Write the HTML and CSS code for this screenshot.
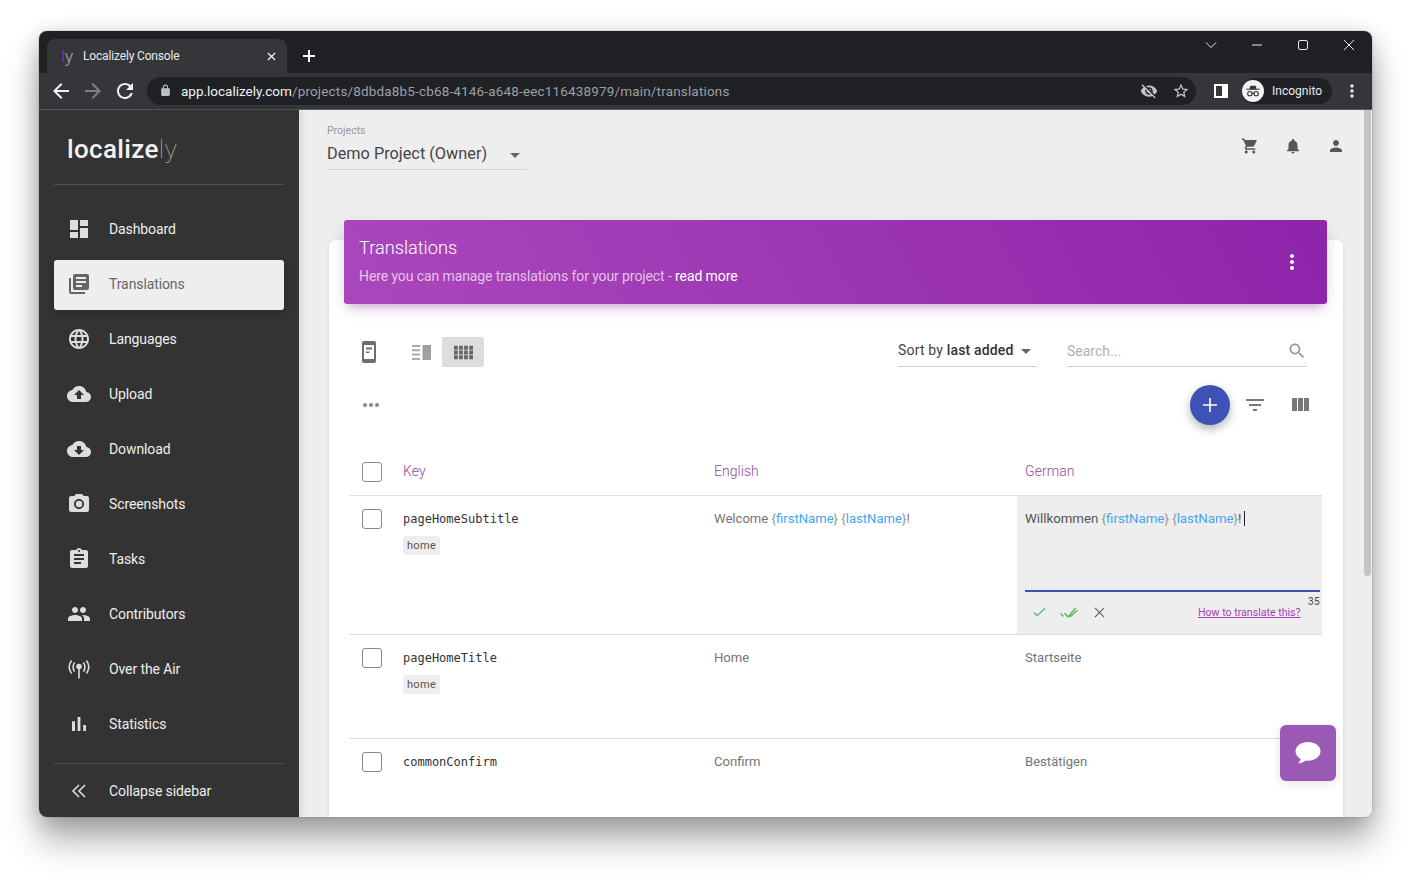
FILE: index.html
```html
<!DOCTYPE html>
<html lang="en">
<head>
    <meta charset="UTF-8">
    <meta name="viewport" content="width=device-width, initial-scale=1.0">
    <title>Localizely Console</title>
    <link rel="stylesheet" href="styles.css">
</head>
<body>
    <div class="window">
        <div class="tabstrip">
            <div class="tab">
                <span class="tab-logo"><span class="tab-l">l</span>y</span>
                <span class="tab-title">Localizely Console</span>
                <svg class="tab-close" viewBox="0 0 10 10"><path d="M1 1l8 8M9 1l-8 8"/></svg>
            </div>
            <svg class="new-tab" viewBox="0 0 12 12"><path d="M6 0v12M0 6h12"/></svg>
            <div class="win-controls">
                <svg viewBox="0 0 12 12"><path d="M1 3.5l5 5 5-5"/></svg>
                <svg viewBox="0 0 12 12"><path d="M1 6h10"/></svg>
                <svg viewBox="0 0 12 12"><rect x="1.5" y="1.5" width="9" height="9" rx="1.5"/></svg>
                <svg viewBox="0 0 12 12"><path d="M1 1l10 10M11 1L1 11"/></svg>
            </div>
        </div>
        <div class="toolbar">
            <svg class="ic-chrome" viewBox="0 0 24 24"><path d="M20 11H7.83l5.59-5.59L12 4l-8 8 8 8 1.41-1.41L7.83 13H20v-2z"/></svg>
            <svg class="ic-chrome dim" viewBox="0 0 24 24"><path d="M12 4l-1.41 1.41L16.17 11H4v2h12.17l-5.58 5.59L12 20l8-8z"/></svg>
            <svg class="ic-chrome" viewBox="0 0 24 24"><path d="M17.65 6.35C16.2 4.9 14.21 4 12 4c-4.42 0-7.99 3.58-7.99 8s3.57 8 7.99 8c3.73 0 6.84-2.55 7.73-6h-2.08c-.82 2.33-3.04 4-5.65 4-3.31 0-6-2.69-6-6s2.69-6 6-6c1.66 0 3.14.69 4.22 1.78L13 11h7V4l-2.35 2.35z"/></svg>
            <div class="omnibox">
                <svg class="ic-lock" viewBox="0 0 24 24"><path d="M18 8h-1V6c0-2.76-2.24-5-5-5S7 3.24 7 6v2H6c-1.1 0-2 .9-2 2v10c0 1.1.9 2 2 2h12c1.1 0 2-.9 2-2V10c0-1.1-.9-2-2-2zM9 6c0-1.66 1.34-3 3-3s3 1.34 3 3v2H9V6z"/></svg>
                <span class="url"><span class="url-host">app.localizely.com</span>/projects/8dbda8b5-cb68-4146-a648-eec116438979/main/translations</span>
                <svg class="ic-omni" viewBox="0 0 24 24"><path d="M12 7c2.76 0 5 2.24 5 5 0 .65-.13 1.26-.36 1.83l2.92 2.92c1.51-1.26 2.7-2.89 3.43-4.75-1.73-4.39-6-7.5-11-7.5-1.4 0-2.74.25-3.98.7l2.16 2.16C10.74 7.13 11.35 7 12 7zM2 4.27l2.28 2.28.46.46C3.08 8.3 1.78 10.02 1 12c1.73 4.39 6 7.5 11 7.5 1.55 0 3.03-.3 4.38-.84l.42.42L19.73 22 21 20.73 3.27 3 2 4.27zM7.53 9.8l1.55 1.55c-.05.21-.08.43-.08.65 0 1.66 1.34 3 3 3 .22 0 .44-.03.65-.08l1.55 1.55c-.67.33-1.41.53-2.2.53-2.76 0-5-2.24-5-5 0-.79.2-1.53.53-2.2zm4.31-.78l3.15 3.15.02-.16c0-1.66-1.34-3-3-3l-.17.01z"/></svg>
                <svg class="ic-omni" viewBox="0 0 24 24"><path d="M22 9.24l-7.19-.62L12 2 9.19 8.63 2 9.24l5.46 4.73L5.82 21 12 17.27 18.18 21l-1.63-7.03L22 9.24zM12 15.4l-3.76 2.27 1-4.28-3.32-2.88 4.38-.38L12 6.1l1.71 4.04 4.38.38-3.32 2.88 1 4.28L12 15.4z"/></svg>
            </div>
            <svg class="ic-panel" viewBox="0 0 14 14"><path fill-rule="evenodd" d="M0 0h14v14H0zM2 2v10h6V2z"/></svg>
            <div class="incognito">
                <span class="incognito-badge">
                    <svg viewBox="0 0 24 24"><path d="M8.5 5h7l1.2 4H21v1.4H3V9h4.3z"/><circle cx="7.8" cy="15.5" r="2.9"/><circle cx="16.2" cy="15.5" r="2.9"/><path d="M10.7 15.2h2.6"/></svg>
                </span>
                <span>Incognito</span>
            </div>
            <svg class="ic-more" viewBox="0 0 24 24"><path d="M12 8c1.1 0 2-.9 2-2s-.9-2-2-2-2 .9-2 2 .9 2 2 2zm0 2c-1.1 0-2 .9-2 2s.9 2 2 2 2-.9 2-2-.9-2-2-2zm0 6c-1.1 0-2 .9-2 2s.9 2 2 2 2-.9 2-2-.9-2-2-2z"/></svg>
        </div>

        <div class="app">
            <aside class="sidebar">
                <div class="logo">localize<span class="logo-thin">ly</span></div>
                <nav class="nav">
                    <a class="nav-item"><svg viewBox="0 0 24 24"><path d="M3 13h8V3H3v10zm0 8h8v-6H3v6zm10 0h8V11h-8v10zm0-18v6h8V3h-8z"/></svg>Dashboard</a>
                    <a class="nav-item active"><svg viewBox="0 0 24 24"><path d="M4 6H2v14c0 1.1.9 2 2 2h14v-2H4V6zm16-4H8c-1.1 0-2 .9-2 2v12c0 1.1.9 2 2 2h12c1.1 0 2-.9 2-2V4c0-1.1-.9-2-2-2zm-1 9H9V9h10v2zm-4 4H9v-2h6v2zm4-8H9V5h10v2z"/></svg>Translations</a>
                    <a class="nav-item"><svg viewBox="0 0 24 24"><path d="M11.99 2C6.47 2 2 6.48 2 12s4.47 10 9.99 10C17.52 22 22 17.52 22 12S17.52 2 11.99 2zm6.93 6h-2.95c-.32-1.25-.78-2.45-1.38-3.56 1.84.63 3.37 1.91 4.33 3.56zM12 4.04c.83 1.2 1.48 2.53 1.91 3.96h-3.82c.43-1.43 1.08-2.76 1.91-3.96zM4.26 14C4.1 13.36 4 12.69 4 12s.1-1.36.26-2h3.38c-.08.66-.14 1.32-.14 2 0 .68.06 1.34.14 2H4.26zm.82 2h2.95c.32 1.25.78 2.45 1.38 3.56-1.84-.63-3.37-1.9-4.33-3.56zm2.95-8H5.08c.96-1.66 2.49-2.93 4.33-3.56C8.81 5.55 8.35 6.75 8.03 8zM12 19.96c-.83-1.2-1.48-2.53-1.91-3.96h3.82c-.43 1.43-1.08 2.76-1.91 3.96zM14.34 14H9.66c-.09-.66-.16-1.32-.16-2 0-.68.07-1.35.16-2h4.68c.09.65.16 1.32.16 2 0 .68-.07 1.34-.16 2zm.25 5.56c.6-1.11 1.06-2.31 1.38-3.56h2.95c-.96 1.65-2.49 2.93-4.33 3.56zM16.36 14c.08-.66.14-1.32.14-2 0-.68-.06-1.34-.14-2h3.38c.16.64.26 1.31.26 2s-.1 1.36-.26 2h-3.38z"/></svg>Languages</a>
                    <a class="nav-item"><svg viewBox="0 0 24 24"><path d="M19.35 10.04C18.67 6.59 15.64 4 12 4 9.11 4 6.6 5.64 5.35 8.04 2.34 8.36 0 10.91 0 14c0 3.31 2.69 6 6 6h13c2.76 0 5-2.24 5-5 0-2.64-2.05-4.78-4.65-4.96zM14 13v4h-4v-4H7l5-5 5 5h-3z"/></svg>Upload</a>
                    <a class="nav-item"><svg viewBox="0 0 24 24"><path d="M19.35 10.04C18.67 6.59 15.64 4 12 4 9.11 4 6.6 5.64 5.35 8.04 2.34 8.36 0 10.91 0 14c0 3.31 2.69 6 6 6h13c2.76 0 5-2.24 5-5 0-2.64-2.05-4.78-4.65-4.96zM17 13l-5 5-5-5h3V9h4v4h3z"/></svg>Download</a>
                    <a class="nav-item"><svg viewBox="0 0 24 24"><circle cx="12" cy="12" r="3.2"/><path d="M9 2L7.17 4H4c-1.1 0-2 .9-2 2v12c0 1.1.9 2 2 2h16c1.1 0 2-.9 2-2V6c0-1.1-.9-2-2-2h-3.17L15 2H9zm3 15c-2.76 0-5-2.24-5-5s2.24-5 5-5 5 2.24 5 5-2.24 5-5 5z"/></svg>Screenshots</a>
                    <a class="nav-item"><svg viewBox="0 0 24 24"><path d="M19 3h-4.18C14.4 1.84 13.3 1 12 1c-1.3 0-2.4.84-2.82 2H5c-1.1 0-2 .9-2 2v14c0 1.1.9 2 2 2h14c1.1 0 2-.9 2-2V5c0-1.1-.9-2-2-2zm-7 0c.55 0 1 .45 1 1s-.45 1-1 1-1-.45-1-1 .45-1 1-1zm2 14H7v-2h7v2zm3-4H7v-2h10v2zm0-4H7V7h10v2z"/></svg>Tasks</a>
                    <a class="nav-item"><svg viewBox="0 0 24 24"><path d="M16 11c1.66 0 2.99-1.34 2.99-3S17.66 5 16 5c-1.66 0-3 1.34-3 3s1.34 3 3 3zm-8 0c1.66 0 2.99-1.34 2.99-3S9.66 5 8 5C6.34 5 5 6.34 5 8s1.34 3 3 3zm0 2c-2.33 0-7 1.17-7 3.5V19h14v-2.5c0-2.33-4.67-3.5-7-3.5zm8 0c-.29 0-.62.02-.97.05 1.16.84 1.97 1.97 1.97 3.45V19h6v-2.5c0-2.33-4.67-3.5-7-3.5z"/></svg>Contributors</a>
                    <a class="nav-item"><svg class="stroked" viewBox="0 0 24 24"><circle class="solid" cx="12" cy="9.5" r="2"/><path d="M12 10v11.5M7.6 5.5C5.6 8 5.6 12 7.6 14.5M16.4 5.5c2 2.5 2 6.5 0 9M4.6 3.5C1.6 7.5 1.6 12.5 4.6 16.5M19.4 3.5c3 4 3 9 0 13"/></svg>Over the Air</a>
                    <a class="nav-item"><svg viewBox="0 0 24 24"><path d="M5 9.2h3V19H5zM10.6 5h2.8v14h-2.8zm5.6 8H19v6h-2.8z"/></svg>Statistics</a>
                </nav>
                <a class="nav-item collapse"><svg class="stroked" viewBox="0 0 24 24"><path d="M12 6l-6 6 6 6M18 6l-6 6 6 6"/></svg>Collapse sidebar</a>
            </aside>

            <main class="main">
                <div class="topbar">
                    <div class="project-select">
                        <label class="project-label">Projects</label>
                        <div class="project-value">Demo Project (Owner)<span class="caret"></span></div>
                    </div>
                    <div class="top-icons">
                        <svg viewBox="0 0 24 24"><path d="M7 18c-1.1 0-1.99.9-1.99 2S5.9 22 7 22s2-.9 2-2-.9-2-2-2zM1 2v2h2l3.6 7.59-1.35 2.45c-.16.28-.25.61-.25.96 0 1.1.9 2 2 2h12v-2H7.42c-.14 0-.25-.11-.25-.25l.03-.12.9-1.63h7.45c.75 0 1.41-.41 1.75-1.03l3.58-6.49c.08-.14.12-.31.12-.48 0-.55-.45-1-1-1H5.21l-.94-2H1zm16 16c-1.1 0-1.99.9-1.99 2s.89 2 1.99 2 2-.9 2-2-.9-2-2-2z"/></svg>
                        <svg viewBox="0 0 24 24"><path d="M12 22c1.1 0 2-.9 2-2h-4c0 1.1.89 2 2 2zm6-6v-5c0-3.07-1.64-5.64-4.5-6.32V4c0-.83-.67-1.5-1.5-1.5s-1.5.67-1.5 1.5v.68C7.63 5.36 6 7.92 6 11v5l-2 2v1h16v-1l-2-2z"/></svg>
                        <svg viewBox="0 0 24 24"><path d="M12 12c2.21 0 4-1.79 4-4s-1.79-4-4-4-4 1.79-4 4 1.79 4 4 4zm0 2c-2.67 0-8 1.34-8 4v2h16v-2c0-2.66-5.33-4-8-4z"/></svg>
                    </div>
                </div>

                <section class="card">
                    <header class="card-header">
                        <div class="card-heading">
                            <h1 class="card-title">Translations</h1>
                            <p class="card-sub">Here you can manage translations for your project - <a class="read-more">read more</a></p>
                        </div>
                        <svg class="card-more" viewBox="0 0 24 24"><path d="M12 8c1.1 0 2-.9 2-2s-.9-2-2-2-2 .9-2 2 .9 2 2 2zm0 2c-1.1 0-2 .9-2 2s.9 2 2 2 2-.9 2-2-.9-2-2-2zm0 6c-1.1 0-2 .9-2 2s.9 2 2 2 2-.9 2-2-.9-2-2-2z"/></svg>
                    </header>

                    <div class="controls">
                        <svg class="ic-device" viewBox="0 0 14 22"><path fill-rule="evenodd" d="M2 0h10a2 2 0 0 1 2 2v18a2 2 0 0 1-2 2H2a2 2 0 0 1-2-2V2a2 2 0 0 1 2-2zM2 4v14h10V4zM4 6.5h6v2H4zM4 10.500h3.500V12H4z"/></svg>
                        <div class="view-toggle">
                            <button class="view-btn"><svg viewBox="0 0 19 15"><path d="M0 0h8v2H0zM0 4.300h8v2H0zM0 8.600h8v2H0zM0 13h8v2H0z"/><path class="split-side" d="M10.500 0H19v15h-8.500z"/></svg></button>
                            <button class="view-btn selected"><svg viewBox="0 0 20 14"><path d="M0 0h4v4H0zM5.300 0h4v4h-4zM10.600 0h4v4h-4zM16 0h4v4h-4zM0 5h4v4H0zM5.300 5h4v4h-4zM10.600 5h4v4h-4zM16 5h4v4h-4zM0 10h4v4H0zM5.300 10h4v4h-4zM10.600 10h4v4h-4zM16 10h4v4h-4z"/></svg></button>
                        </div>
                        <div class="sort-select">Sort by <b>last added</b><span class="caret"></span></div>
                        <div class="search">
                            <span>Search...</span>
                            <svg viewBox="0 0 24 24"><path d="M15.5 14h-.79l-.28-.27C15.41 12.59 16 11.11 16 9.5 16 5.91 13.09 3 9.5 3S3 5.91 3 9.5 5.91 16 9.5 16c1.61 0 3.09-.59 4.23-1.57l.27.28v.79l5 4.99L20.49 19l-4.99-5zm-6 0C7.01 14 5 11.99 5 9.5S7.01 5 9.5 5 14 7.01 14 9.5 11.99 14 9.5 14z"/></svg>
                        </div>
                    </div>

                    <div class="actions">
                        <svg class="ic-dots" viewBox="0 0 16 4"><circle cx="2" cy="2" r="2"/><circle cx="8" cy="2" r="2"/><circle cx="14" cy="2" r="2"/></svg>
                        <button class="fab"><svg viewBox="0 0 14 14"><path d="M7 0v14M0 7h14"/></svg></button>
                        <svg class="ic-action" viewBox="0 0 24 24"><path d="M10 18h4v-2h-4v2zM3 6v2h18V6H3zm3 7h12v-2H6v2z"/></svg>
                        <svg class="ic-action" viewBox="0 0 24 24"><path d="M10 18h5V5h-5v13zm-6 0h5V5H4v13zM16 5v13h5V5h-5z"/></svg>
                    </div>

                    <div class="table">
                        <div class="row head">
                            <div class="cell key-cell"><span class="checkbox"></span><span>Key</span></div>
                            <div class="cell">English</div>
                            <div class="cell">German</div>
                        </div>
                        <div class="row row-edit">
                            <div class="cell key-cell">
                                <span class="checkbox"></span>
                                <div>
                                    <div class="key">pageHomeSubtitle</div>
                                    <span class="tag">home</span>
                                </div>
                            </div>
                            <div class="cell text">Welcome <span class="ph">{<i>firstName</i>}</span> <span class="ph">{<i>lastName</i>}</span>!</div>
                            <div class="cell editor">
                                <div class="editor-text">Willkommen <span class="ph">{<i>firstName</i>}</span> <span class="ph">{<i>lastName</i>}</span>!<span class="text-caret"></span></div>
                                <div class="editor-count">35</div>
                                <div class="editor-actions">
                                    <svg class="ok" viewBox="0 0 14 10"><path d="M1 5.500l3.500 3.500L13 1"/></svg>
                                    <svg class="ok-all" viewBox="0 0 18 11"><path d="M.5 6.500l3 3M4.500 6l3.500 4L15.500 1M9.500 8.500l1 1L17.500 3"/></svg>
                                    <svg class="no" viewBox="0 0 12 12"><path d="M1 1l10 10M11 1L1 11"/></svg>
                                    <a class="help-link">How to translate this?</a>
                                </div>
                            </div>
                        </div>
                        <div class="row row-tagged">
                            <div class="cell key-cell">
                                <span class="checkbox"></span>
                                <div>
                                    <div class="key">pageHomeTitle</div>
                                    <span class="tag">home</span>
                                </div>
                            </div>
                            <div class="cell text">Home</div>
                            <div class="cell text">Startseite</div>
                        </div>
                        <div class="row">
                            <div class="cell key-cell">
                                <span class="checkbox"></span>
                                <div class="key">commonConfirm</div>
                            </div>
                            <div class="cell text">Confirm</div>
                            <div class="cell text">Bestätigen</div>
                        </div>
                    </div>
                </section>
                <button class="chat"><svg viewBox="0 0 26 24"><path d="M13 1C6 1 .5 5.1.5 10.300c0 3.200 2 5.900 5 7.600-.3 1.600-1.200 3.200-2.500 4.600 2.900-.2 5.500-1.300 7.500-3 .8.100 1.600.2 2.500.2 7 0 12.500-4.100 12.500-9.400S20 1 13 1z"/></svg></button>
            </main>
            <div class="scrollbar"><div class="scroll-thumb"></div></div>
        </div>
    </div>
</body>
</html>
```

FILE: styles.css
```css
* {
    box-sizing: border-box;
}

body {
    margin: 0;
    height: 896px;
    overflow: hidden;
    padding: 31px 36px 0 39px;
    background: #ffffff;
    font-family: 'Roboto', sans-serif;
}

svg {
    display: block;
    flex: none;
    fill: currentColor;
}

button {
    border: none;
    padding: 0;
    font: inherit;
}

.window {
    display: flex;
    flex-direction: column;
    height: 786px;
    border-radius: 8px;
    overflow: hidden;
    box-shadow: 0 0 0 1px rgba(0, 0, 0, 0.08);
}

body::before {
    content: '';
    position: absolute;
    left: 39px;
    top: 31px;
    width: 1333px;
    height: 786px;
    border-radius: 8px;
    box-shadow: 0 24px 34px rgba(0, 0, 0, 0.3), 0 4px 22px rgba(0, 0, 0, 0.2);
}

.window > * {
    position: relative;
}

.tabstrip {
    display: flex;
    align-items: flex-end;
    height: 42px;
    padding-left: 8px;
    background: #202124;
}

.tab {
    display: flex;
    align-items: center;
    width: 240px;
    height: 34px;
    padding: 0 11px 0 14px;
    background: #35363a;
    border-radius: 8px 8px 0 0;
    color: #e8eaed;
    font-size: 12px;
}

.tab-logo {
    width: 22px;
    color: #9a9b9f;
    font-family: 'Open Sans', sans-serif;
    font-size: 16px;
}

.tab-l {
    color: #8e35a0;
}

.tab-title {
    flex: 1;
    letter-spacing: -0.16px;
}

.tab-close {
    width: 9px;
    height: 9px;
    fill: none;
    stroke: #e8eaed;
    stroke-width: 1.5;
}

.new-tab {
    width: 12px;
    height: 12px;
    margin: 0 0 11px 16px;
    fill: none;
    stroke: #ffffff;
    stroke-width: 2;
}

.win-controls {
    display: flex;
    align-self: flex-start;
    gap: 34px;
    margin: 8px 17px 0 auto;
}

.win-controls svg {
    width: 12px;
    height: 12px;
    fill: none;
    stroke: #e8eaed;
    stroke-width: 1;
}

.toolbar {
    display: flex;
    align-items: center;
    height: 37px;
    padding: 0 10px 1px 10px;
    background: #35363a;
    border-bottom: 1px solid #5a5b5e;
}

.ic-chrome {
    width: 24px;
    height: 24px;
    margin-right: 8px;
    color: #f1f3f4;
}

.ic-chrome.dim {
    color: #7d7f83;
}

.omnibox {
    display: flex;
    align-items: center;
    width: 1050px;
    height: 28px;
    margin-left: 2px;
    padding: 0 6px 0 12px;
    background: #202124;
    border-radius: 14px;
}

.ic-lock {
    width: 13px;
    height: 13px;
    margin-right: 9px;
    color: #bdc1c6;
}

.url {
    flex: 1;
    color: #9aa0a6;
    font-size: 13.5px;
    letter-spacing: 0.165px;
    white-space: nowrap;
}

.url-host {
    color: #f1f3f4;
    letter-spacing: 0;
}

.ic-omni {
    width: 18px;
    height: 18px;
    margin-right: 14px;
    color: #c4c7ca;
}

.ic-omni:last-child {
    margin-right: 0;
}

.ic-panel {
    width: 14px;
    height: 14px;
    margin-left: 18px;
    color: #ffffff;
}

.incognito {
    display: flex;
    align-items: center;
    gap: 8px;
    width: 90px;
    height: 26px;
    margin-left: 14px;
    background: #202124;
    border-radius: 13px;
    color: #e8eaed;
    font-size: 12px;
}

.incognito-badge {
    display: flex;
    align-items: center;
    justify-content: center;
    width: 22px;
    height: 22px;
    background: #f1f3f4;
    border-radius: 50%;
}

.incognito-badge svg {
    width: 18px;
    height: 18px;
    color: #35363a;
}

.incognito-badge circle,
.incognito-badge path:last-child {
    fill: none;
    stroke: #35363a;
    stroke-width: 1.5;
}

.ic-more {
    width: 20px;
    height: 20px;
    margin-left: 10px;
    color: #e8eaed;
}

.app {
    display: flex;
    flex: 1;
    min-height: 0;
}

.sidebar {
    flex: none;
    width: 260px;
    padding: 0 15px;
    background: #333333;
    box-shadow: 2px 0 8px rgba(0, 0, 0, 0.12);
    z-index: 1;
}

.logo {
    height: 75px;
    padding: 23px 0 0 13px;
    border-bottom: 1px solid #515151;
    color: #f2f2f2;
    font-size: 26px;
    font-weight: 500;
    line-height: 32px;
    letter-spacing: 0.35px;
}

.logo-thin {
    color: #b5b5b5;
    font-weight: 100;
}

.nav {
    display: flex;
    flex-direction: column;
    gap: 5px;
    margin-top: 20px;
    padding-bottom: 13px;
    border-bottom: 1px solid #515151;
}

.nav-item {
    display: flex;
    align-items: center;
    gap: 18px;
    height: 50px;
    padding: 0 0 2px 13px;
    border-radius: 3px;
    color: #eeeeee;
    font-size: 14px;
    letter-spacing: -0.1px;
}

.nav-item svg {
    width: 24px;
    height: 24px;
    color: #dddddd;
}

.nav-item svg.stroked {
    fill: none;
    stroke: #dddddd;
    stroke-width: 1.6;
}

.nav-item svg .solid {
    fill: #dddddd;
}

.nav-item.active {
    background: #eeeeee;
    box-shadow: 0 4px 10px rgba(0, 0, 0, 0.15);
    color: #666666;
}

.nav-item.active svg {
    color: #666666;
}

.collapse {
    margin-top: 3px;
}

.main {
    position: relative;
    flex: 1;
    min-width: 0;
    padding-left: 28px;
    background: #eeeeee;
    overflow: hidden;
}

.topbar {
    display: flex;
    justify-content: space-between;
    height: 110px;
    padding: 14px 18px 0 0;
}

.project-select {
    width: 200px;
    height: 46px;
    border-bottom: 1px solid #d2d2d2;
}

.project-label {
    display: block;
    color: #999999;
    font-size: 10.5px;
    line-height: 13px;
}

.project-value {
    display: flex;
    align-items: center;
    margin-top: 7px;
    color: #444444;
    font-size: 16.3px;
    line-height: 20px;
}

.caret {
    width: 0;
    height: 0;
    margin: 2px 0 0 23px;
    border-style: solid;
    border-width: 5px 5px 0;
    border-color: #666666 transparent transparent;
}

.top-icons {
    display: flex;
    gap: 25px;
    padding-top: 13px;
    color: #555555;
}

.top-icons svg {
    width: 18px;
    height: 18px;
}

.card {
    width: 1014px;
    margin: 20px 0 0 2px;
    padding: 0 15px;
    height: 600px;
    background: #ffffff;
    border-radius: 6px;
    box-shadow: 0 1px 4px rgba(0, 0, 0, 0.1);
}

.card-header {
    display: flex;
    align-items: center;
    justify-content: space-between;
    width: 983px;
    height: 84px;
    padding: 0 23px 0 15px;
    position: relative;
    top: -20px;
    background: linear-gradient(60deg, #ab47bc, #8e24aa);
    border-radius: 3px;
    box-shadow: 0 4px 20px rgba(0, 0, 0, 0.08), 0 7px 10px -5px rgba(156, 39, 176, 0.4);
    color: #ffffff;
}

.card-heading {
    padding-bottom: 3px;
}

.card-title {
    margin: 0;
    font-size: 18.2px;
    font-weight: 300;
    line-height: 24px;
}

.card-sub {
    margin: 7px 0 0;
    color: rgba(255, 255, 255, 0.7);
    font-size: 14px;
    line-height: 18px;
    letter-spacing: -0.1px;
}

.read-more {
    color: #ffffff;
}

.card-more {
    width: 24px;
    height: 24px;
}

.controls {
    display: flex;
    align-items: flex-start;
    height: 30px;
    margin-top: 13px;
    padding-left: 18px;
}

.ic-device {
    width: 14px;
    height: 22px;
    margin-top: 4px;
    color: #6e6e6e;
}

.view-toggle {
    display: flex;
    margin-left: 24px;
}

.view-btn {
    display: flex;
    align-items: center;
    justify-content: center;
    width: 42px;
    height: 30px;
    background: transparent;
    color: #aaaaaa;
    border-radius: 0 3px 3px 0;
}

.view-btn svg {
    width: 19px;
    height: 15px;
}

.split-side {
    fill: #a0a0a0;
}

.view-btn.selected {
    background: #dddddd;
    color: #666666;
}

.sort-select {
    display: flex;
    align-items: center;
    width: 139px;
    height: 30px;
    margin-left: 414px;
    padding-bottom: 4px;
    border-bottom: 1px solid #d2d2d2;
    color: #444444;
    font-size: 14px;
    letter-spacing: 0.17px;
    white-space: pre;
}

.sort-select b {
    font-weight: 500;
    color: #333333;
}

.sort-select .caret {
    margin: 4px 0 0 7px;
}

.search {
    display: flex;
    align-items: center;
    justify-content: space-between;
    width: 240px;
    height: 30px;
    margin-left: 30px;
    padding: 0 0 1px;
    border-bottom: 1px solid #d2d2d2;
    color: #b0b0b0;
    font-size: 14px;
}

.search svg {
    width: 20px;
    height: 20px;
    color: #999999;
}

.actions {
    display: flex;
    align-items: center;
    height: 40px;
    margin-top: 18px;
    padding-left: 19px;
    color: #777777;
}

.ic-dots {
    width: 16px;
    height: 4px;
    color: #888888;
}

.fab {
    display: flex;
    align-items: center;
    justify-content: center;
    width: 40px;
    height: 40px;
    margin-left: 811px;
    background: #3f51b5;
    border-radius: 50%;
    box-shadow: 0 4px 10px rgba(0, 0, 0, 0.3);
}

.fab svg {
    width: 14px;
    height: 14px;
    fill: none;
    stroke: #ffffff;
    stroke-width: 1.6;
}

.ic-action {
    width: 24px;
    height: 24px;
    margin-left: 13px;
}

.ic-action:last-child {
    margin-left: 21px;
}

.table {
    width: 973px;
    margin: 25px 0 0 5px;
}

.row {
    display: grid;
    grid-template-columns: 357px 311px 305px;
    min-height: 104px;
    border-bottom: 1px solid #dddddd;
    font-size: 12.5px;
    color: #666666;
}

.row.head {
    height: 46px;
    min-height: 46px;
    color: #95489f;
    font-size: 14px;
    font-weight: 300;
    letter-spacing: 0.05px;
}

.row.head .cell {
    padding-top: 13px;
}

.row.head .key-cell {
    padding-top: 12px;
    line-height: 18px;
}

.row-edit {
    height: 139px;
}

.cell {
    padding: 14px 8px 0;
}

.text {
    line-height: 18px;
    font-size: 13.1px;
    color: #757575;
}

.key-cell {
    display: flex;
    gap: 21px;
    padding: 13px 0 0 13px;
}

.checkbox {
    flex: none;
    width: 20px;
    height: 20px;
    background: #ffffff;
    border: 1px solid #888888;
    border-radius: 3px;
}

.key {
    margin-top: 2px;
    color: #333333;
    font-family: 'DejaVu Sans Mono', monospace;
    font-size: 12px;
    line-height: 16px;
}

.tag {
    display: inline-block;
    margin-top: 9px;
    padding: 0 4px;
    background: #eeeeee;
    border-radius: 3px;
    color: #555555;
    font-size: 11px;
    letter-spacing: 0.3px;
    line-height: 19px;
}

.ph {
    color: #999999;
}

.ph i {
    color: #42a5f5;
    font-style: normal;
}

.editor {
    padding: 14px 2px 0 8px;
    background: #eeeeee;
}

.editor-text {
    height: 82px;
    border-bottom: 2px solid #3f51b5;
    color: #555555;
    font-size: 13.25px;
    line-height: 18px;
}

.text-caret {
    display: inline-block;
    width: 1px;
    height: 15px;
    margin-left: 3px;
    background: #222222;
    vertical-align: -3px;
}

.editor-count {
    margin-top: 3px;
    color: #444444;
    font-size: 10px;
    letter-spacing: 0.4px;
    line-height: 14px;
    text-align: right;
}

.editor-actions {
    display: flex;
    align-items: center;
    height: 18px;
    margin-top: -6px;
    padding-left: 8px;
}

.editor-actions svg {
    fill: none;
    stroke-width: 1.4;
}

.editor-actions .ok {
    width: 13px;
    height: 10px;
    stroke: #5cb85c;
}

.editor-actions .ok-all {
    width: 18px;
    height: 11px;
    margin-left: 14px;
    stroke: #5cb85c;
}

.editor-actions .no {
    width: 11px;
    height: 11px;
    margin-left: 16px;
    stroke: #666666;
}

.help-link {
    margin-left: 93px;
    color: #a63db8;
    font-size: 10.6px;
    text-decoration: underline;
}

.chat {
    position: absolute;
    right: 27px;
    bottom: 36px;
    display: flex;
    align-items: center;
    justify-content: center;
    width: 56px;
    height: 56px;
    background: #9b59b6;
    border-radius: 6px;
    box-shadow: 0 2px 10px rgba(0, 0, 0, 0.12);
}

.chat svg {
    width: 26px;
    height: 24px;
    color: #ffffff;
}

.scrollbar {
    flex: none;
    width: 9px;
    padding-left: 1px;
    background: #eeeeee;
}

.scroll-thumb {
    width: 7px;
    height: 466px;
    background: #c4c4c4;
    border-radius: 0 0 4px 4px;
}
```
